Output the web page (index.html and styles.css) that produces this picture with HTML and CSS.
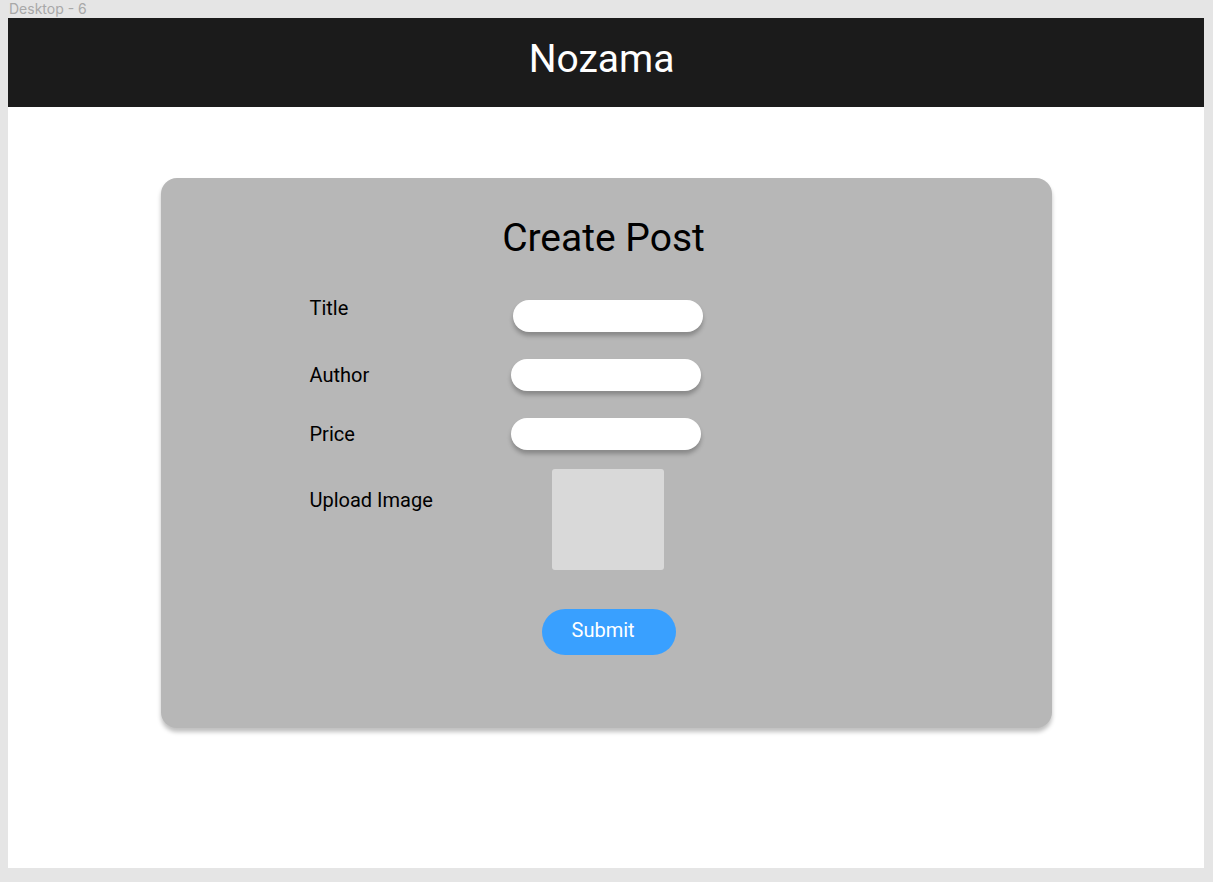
FILE: index.html
```html
<!DOCTYPE html>
<html lang="en">
<head>
<meta charset="utf-8">
<title>Nozama - Create Post</title>
<link rel="stylesheet" href="styles.css">
</head>
<body>
<div class="canvas-label">Desktop - 6</div>
<div class="frame">
  <header class="topbar">
    <h1 class="brand">Nozama</h1>
  </header>
  <main class="content">
    <section class="card">
      <h2 class="card-title">Create Post</h2>
      <form class="post-form">
        <div class="field field--title">
          <label class="field-label" for="title">Title</label>
          <input class="field-input" id="title" type="text">
        </div>
        <div class="field field--author">
          <label class="field-label" for="author">Author</label>
          <input class="field-input" id="author" type="text">
        </div>
        <div class="field field--price">
          <label class="field-label" for="price">Price</label>
          <input class="field-input" id="price" type="text">
        </div>
        <div class="field field--upload">
          <label class="field-label">Upload Image</label>
          <div class="upload-slot"><div class="upload-box"></div></div>
        </div>
        <div class="actions">
          <button class="submit" type="button">Submit</button>
        </div>
      </form>
    </section>
  </main>
</div>
</body>
</html>
```
FILE: styles.css
```css
* { box-sizing: border-box; }

html, body {
  margin: 0;
  padding: 0;
}

body {
  background: #e5e5e5;
  font-family: Roboto, "Liberation Sans", Arial, sans-serif;
  width: 1213px;
  height: 882px;
  overflow: hidden;
}

.canvas-label {
  height: 18px;
  line-height: 18px;
  padding-left: 9px;
  font-family: Inter, "Liberation Sans", sans-serif;
  font-size: 14px;
  color: #a8a8a8;
}

.frame {
  margin-left: 8px;
  width: 1196px;
  height: 850px;
  background: #ffffff;
  display: flex;
  flex-direction: column;
}

.topbar {
  height: 89px;
  background: #1b1b1b;
  padding-top: 18px;
  padding-right: 9px;
  display: flex;
  justify-content: center;
}

.brand {
  margin: 0;
  font-weight: 400;
  font-size: 39px;
  line-height: 47px;
  color: #ffffff;
}

.content {
  flex: 1;
  padding-top: 71px;
  display: flex;
  justify-content: center;
  align-items: flex-start;
}

.card {
  width: 891px;
  height: 550px;
  background: #b7b7b7;
  border-radius: 16px;
  box-shadow: 0 4px 4px rgba(0, 0, 0, 0.25);
  padding-top: 37px;
}

.card-title {
  margin: 0;
  padding-right: 5px;
  text-align: center;
  font-weight: 400;
  font-size: 39px;
  line-height: 47px;
  color: #000000;
}

.post-form {
  margin-top: 35px;
  padding-left: 149px;
  display: flex;
  flex-direction: column;
}

.field {
  display: flex;
  align-items: center;
}

.field + .field { margin-top: 27px; }

.field-label {
  width: 201px;
  flex: none;
  font-size: 20px;
  line-height: 23px;
  color: #000000;
}

.field-input {
  width: 190px;
  height: 32px;
  border: none;
  border-radius: 16px;
  background: #ffffff;
  box-shadow: 0 4px 4px rgba(0, 0, 0, 0.25);
  padding: 0 14px;
  font-family: inherit;
  font-size: 16px;
  outline: none;
}

.field.field--title { align-items: flex-start; }
.field--title .field-input { margin-top: 3px; margin-left: 2px; }

.field.field--upload {
  margin-top: 19px;
  align-items: flex-start;
}

.field--upload .field-label { margin-top: 20px; }

.upload-slot {
  width: 190px;
  padding-left: 41px;
}

.upload-box {
  width: 112px;
  height: 101px;
  background: #d9d9d9;
  border-radius: 3px;
}

.actions {
  margin-top: 39px;
  padding-left: 232px;
}

.submit {
  width: 134px;
  height: 46px;
  border: none;
  border-radius: 23px;
  background: #39a0ff;
  color: #ffffff;
  font-family: Roboto, "Liberation Sans", Arial, sans-serif;
  font-size: 20px;
  line-height: 42px;
  padding: 0 0 4px 30px;
  text-align: left;
  cursor: pointer;
}
```
